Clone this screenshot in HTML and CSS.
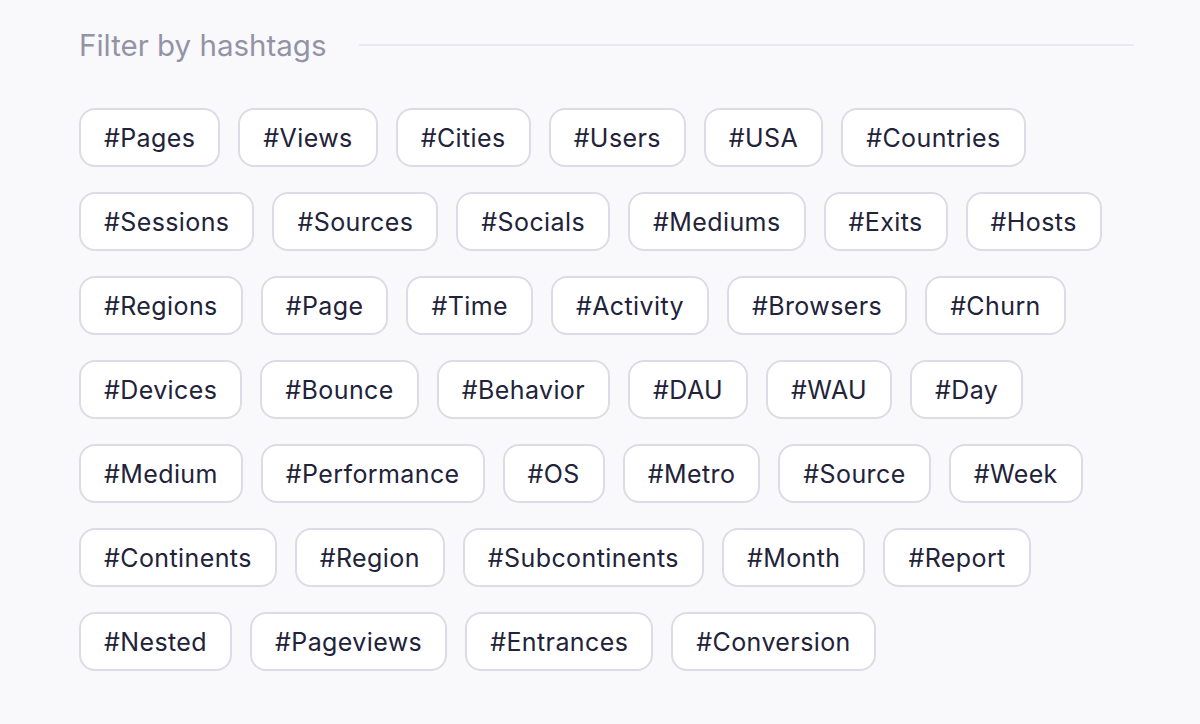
FILE: index.html
```html
<!DOCTYPE html>
<html lang="en">
<head>
    <meta charset="UTF-8">
    <meta name="viewport" content="width=device-width, initial-scale=1.0">
    <title>Filter by hashtags</title>
    <link rel="stylesheet" href="styles.css">
</head>
<body>

    <div class="container">
        <!-- Section header -->
        <div class="filter-header">
            <h2>Filter by hashtags</h2>
            <span class="divider"></span>
        </div>

        <!-- Hashtag list -->
        <div class="tags">
            <button class="tag">#Pages</button>
            <button class="tag">#Views</button>
            <button class="tag">#Cities</button>
            <button class="tag">#Users</button>
            <button class="tag">#USA</button>
            <button class="tag">#Countries</button>
            <button class="tag">#Sessions</button>
            <button class="tag">#Sources</button>
            <button class="tag">#Socials</button>
            <button class="tag">#Mediums</button>
            <button class="tag">#Exits</button>
            <button class="tag">#Hosts</button>
            <button class="tag">#Regions</button>
            <button class="tag">#Page</button>
            <button class="tag">#Time</button>
            <button class="tag">#Activity</button>
            <button class="tag">#Browsers</button>
            <button class="tag">#Churn</button>
            <button class="tag">#Devices</button>
            <button class="tag">#Bounce</button>
            <button class="tag">#Behavior</button>
            <button class="tag">#DAU</button>
            <button class="tag">#WAU</button>
            <button class="tag">#Day</button>
            <button class="tag">#Medium</button>
            <button class="tag">#Performance</button>
            <button class="tag">#OS</button>
            <button class="tag">#Metro</button>
            <button class="tag">#Source</button>
            <button class="tag">#Week</button>
            <button class="tag">#Continents</button>
            <button class="tag">#Region</button>
            <button class="tag">#Subcontinents</button>
            <button class="tag">#Month</button>
            <button class="tag">#Report</button>
            <button class="tag">#Nested</button>
            <button class="tag">#Pageviews</button>
            <button class="tag">#Entrances</button>
            <button class="tag">#Conversion</button>
        </div>
    </div>

</body>
</html>
```

FILE: styles.css
```css
body, html {
    margin: 0;
    padding: 0;
    font-family: Inter, "Noto Sans", sans-serif;
    background-color: #f9f9fc;
    height: 100%;
}

.container {
    padding: 24px 66px 0 79px;
}

.filter-header {
    display: flex;
    align-items: center;
    gap: 32px;
    height: 42px;
}

.filter-header h2 {
    margin: 0;
    font-size: 29.5px;
    font-weight: 400;
    color: #9393a6;
    white-space: nowrap;
}

.divider {
    flex: 1;
    height: 2px;
    background-color: #e9e9ef;
}

.tags {
    display: flex;
    flex-wrap: wrap;
    gap: 25px 18px;
    margin-top: 42px;
}

.tag {
    font-family: inherit;
    font-size: 25px;
    letter-spacing: 0.4px;
    color: #222239;
    background-color: #ffffff;
    border: 2px solid #dcdce5;
    border-radius: 16px;
    height: 59px;
    padding: 0 23px;
    cursor: pointer;
}

.tag:hover {
    border-color: #c4c4d2;
}
```
